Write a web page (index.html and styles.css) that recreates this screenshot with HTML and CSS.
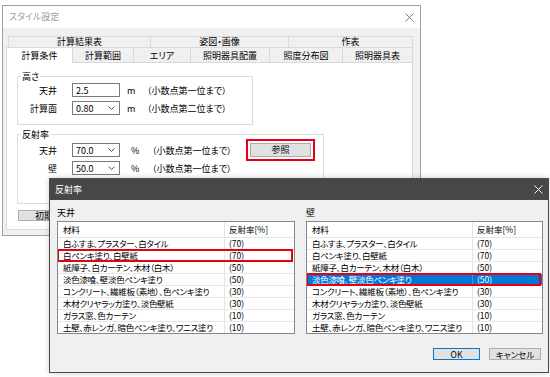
FILE: index.html
```html
<!DOCTYPE html>
<html lang="ja">
<head>
<meta charset="utf-8">
<title>スタイル設定</title>
<link rel="stylesheet" href="styles.css">
</head>
<body>
<div class="desk">
  <section class="win back">
    <header class="back-bar">
      <span class="back-title">スタイル設定</span>
      <svg class="xicon x-back" width="9" height="9" viewBox="0 0 9 9"><path d="M0.5 0.5L8.5 8.5M8.5 0.5L0.5 8.5"/></svg>
    </header>
    <div class="tabs">
      <div class="tabrow r1">
        <div class="tab">計算結果表</div>
        <div class="tab">姿図・画像</div>
        <div class="tab">作表</div>
      </div>
      <div class="tabrow r2">
        <div class="tab sel">計算条件</div>
        <div class="tab">計算範囲</div>
        <div class="tab">エリア</div>
        <div class="tab">照明器具配置</div>
        <div class="tab">照度分布図</div>
        <div class="tab">照明器具表</div>
      </div>
    </div>
    <div class="panel">
      <div class="group g-height">
        <span class="legend">高さ</span>
        <div class="frows">
          <div class="frow">
            <span class="flabel">天井</span>
            <span class="field">2.5</span>
            <span class="unit-m">m</span>
            <span class="note">（小数点第一位まで）</span>
          </div>
          <div class="frow">
            <span class="flabel">計算面</span>
            <span class="field">0.80<svg class="chev" width="7" height="4" viewBox="0 0 7 4"><path d="M0.5 0.5L3.5 3.5L6.5 0.5"/></svg></span>
            <span class="unit-m">m</span>
            <span class="note">（小数点第二位まで）</span>
          </div>
        </div>
      </div>
      <div class="group g-refl">
        <span class="legend">反射率</span>
        <div class="frows">
          <div class="frow">
            <span class="flabel">天井</span>
            <span class="field">70.0<svg class="chev" width="7" height="4" viewBox="0 0 7 4"><path d="M0.5 0.5L3.5 3.5L6.5 0.5"/></svg></span>
            <span class="unit-p">%</span>
            <span class="note note-w">（小数点第一位まで）</span>
            <button class="btn btn-ref">参照</button>
          </div>
          <div class="frow">
            <span class="flabel">壁</span>
            <span class="field">50.0<svg class="chev" width="7" height="4" viewBox="0 0 7 4"><path d="M0.5 0.5L3.5 3.5L6.5 0.5"/></svg></span>
            <span class="unit-p">%</span>
            <span class="note">（小数点第一位まで）</span>
          </div>
        </div>
      </div>
      <button class="btn btn-init">初期</button>
    </div>
  </section>

  <section class="win front">
    <header class="front-bar">
      <span>反射率</span>
      <svg class="xicon x-front" width="9" height="9" viewBox="0 0 9 9"><path d="M0.5 0.5L8.5 8.5M8.5 0.5L0.5 8.5"/></svg>
    </header>
    <div class="client">
      <div class="cols">
        <div class="col left">
          <div class="clabel">天井</div>
          <div class="list">
            <div class="lhead"><span class="c1">材料</span><span class="c2">反射率[%]</span></div>
            <div class="lrow"><span class="c1">白ふすま、プラスター、白タイル</span><span class="c2">(70)</span></div>
            <div class="lrow mark"><span class="c1">白ペンキ塗り、白壁紙</span><span class="c2">(70)</span></div>
            <div class="lrow"><span class="c1">紙障子、白カーテン、木材（白木）</span><span class="c2">(50)</span></div>
            <div class="lrow"><span class="c1">淡色漆喰、壁淡色ペンキ塗り</span><span class="c2">(50)</span></div>
            <div class="lrow"><span class="c1">コンクリート、繊維板（素地）、色ペンキ塗り</span><span class="c2">(30)</span></div>
            <div class="lrow"><span class="c1">木材クリヤラッカ塗り、淡色壁紙</span><span class="c2">(30)</span></div>
            <div class="lrow"><span class="c1">ガラス窓、色カーテン</span><span class="c2">(10)</span></div>
            <div class="lrow"><span class="c1">土壁、赤レンガ、暗色ペンキ塗り、ワニス塗り</span><span class="c2">(10)</span></div>
          </div>
        </div>
        <div class="col right">
          <div class="clabel">壁</div>
          <div class="list">
            <div class="lhead"><span class="c1">材料</span><span class="c2">反射率[%]</span></div>
            <div class="lrow"><span class="c1">白ふすま、プラスター、白タイル</span><span class="c2">(70)</span></div>
            <div class="lrow"><span class="c1">白ペンキ塗り、白壁紙</span><span class="c2">(70)</span></div>
            <div class="lrow"><span class="c1">紙障子、白カーテン、木材（白木）</span><span class="c2">(50)</span></div>
            <div class="lrow sel mark"><span class="c1">淡色漆喰、壁淡色ペンキ塗り</span><span class="c2">(50)</span></div>
            <div class="lrow"><span class="c1">コンクリート、繊維板（素地）、色ペンキ塗り</span><span class="c2">(30)</span></div>
            <div class="lrow"><span class="c1">木材クリヤラッカ塗り、淡色壁紙</span><span class="c2">(30)</span></div>
            <div class="lrow"><span class="c1">ガラス窓、色カーテン</span><span class="c2">(10)</span></div>
            <div class="lrow"><span class="c1">土壁、赤レンガ、暗色ペンキ塗り、ワニス塗り</span><span class="c2">(10)</span></div>
          </div>
        </div>
      </div>
      <div class="btns">
        <button class="btn dbtn ok">OK</button>
        <button class="btn dbtn cancel">キャンセル</button>
      </div>
    </div>
  </section>
</div>
</body>
</html>
```
FILE: styles.css
```css
* { box-sizing: border-box; }
html, body { margin: 0; padding: 0; }
body {
  width: 550px;
  height: 377px;
  overflow: hidden;
  background: #fff;
  color: #000;
  font-family: "Noto Sans CJK JP", "Noto Sans", sans-serif;
  font-feature-settings: "palt" 1;
}
.desk { position: relative; width: 550px; height: 377px; }
.win { position: absolute; display: flex; flex-direction: column; }

/* back window */
.back {
  left: 2px; top: 5px; width: 419px; height: 231px;
  border: 1px solid #a0a0a0;
  background: #f0f0f0;
}
.back-bar {
  flex: none; height: 22px; background: #fff;
  display: flex; align-items: center; justify-content: space-between;
  padding: 0 6px;
}
.back-title { font-size: 9px; line-height: 12px; color: #9a9a9a; }
.xicon { fill: none; stroke-width: 1; }
.x-back { stroke: #7a7a7a; }
.x-front { stroke: #ffffff; }

.tabs { flex: none; margin: 8px 0 0 5px; width: 405px; }
.tabrow { display: grid; border-right: 1px solid #d9d9d9; }
.r1 { grid-template-columns: 142px 138px 1fr; height: 11px; }
.r2 { grid-template-columns: 64px 61px 57px 79px 73px 1fr; height: 15px; }
.tab {
  border-left: 1px solid #d9d9d9; border-top: 1px solid #d9d9d9;
  background: #f0f0f0;
  font-size: 9px; line-height: 10px;
  display: flex; align-items: center; justify-content: center;
  white-space: nowrap;
}
.tab.sel {
  background: #fff; margin-left: -2px; height: 16px;
  position: relative; z-index: 1;
}

.panel {
  flex: none; margin-left: 3px; width: 407px; height: 168px;
  border: 1px solid #d9d9d9; background: #fff;
  padding: 13px 0 0 10px;
  display: flex; flex-direction: column; align-items: flex-start;
}
.group { flex: none; border: 1px solid #dcdcdc; }
.g-height { width: 236px; height: 49px; }
.g-refl { width: 307px; height: 70px; margin-top: 9px; }
.legend {
  display: block; width: max-content;
  margin: -6px 0 0 3px; padding: 0 1px;
  background: #fff; font-size: 9px; line-height: 11px;
}
.frows { display: flex; flex-direction: column; gap: 4px; }
.g-height .frows { margin-top: 1px; }
.g-refl .frows { margin-top: 3px; }
.frow { display: flex; align-items: center; height: 14px; font-size: 9px; line-height: 11px; white-space: nowrap; }
.flabel { width: 39px; margin-right: 15px; text-align: right; }
.field {
  width: 48px; height: 14px; flex: none;
  border: 1px solid #7a7a7a; background: #fff;
  display: flex; align-items: center; justify-content: space-between;
  padding: 0 4px 0 3px;
}
.chev { fill: none; stroke: #555; stroke-width: 1; }
.unit-m { margin-left: 7px; width: 20px; }
.unit-p { margin-left: 11px; width: 21px; }
.note-w { width: 98px; }

.btn {
  margin: 0; padding: 0;
  background: #e1e1e1; border: 1px solid #adadad; color: #000;
  font-family: inherit; font-feature-settings: "palt" 1;
  display: flex; align-items: center; justify-content: center;
}
.btn-ref { width: 61px; height: 14px; font-size: 9px; line-height: 10px; outline: 2px solid #e60012; outline-offset: 2px; }
.btn-init {
  width: 88px; height: 11px; margin: 6px 0 0 1px;
  justify-content: flex-start; padding-left: 16px;
  font-size: 9px; line-height: 9px;
}

/* front dialog */
.front {
  left: 49px; top: 178px; width: 500px; height: 195px;
  border: 1px solid #4a4a4a;
  background: #f0f0f0;
  box-shadow: 0 0 6px rgba(0, 0, 0, 0.2);
}
.front-bar {
  flex: none; height: 21px; background: #474747; color: #fff;
  display: flex; align-items: center; justify-content: space-between;
  padding: 0 5px; font-size: 9px; line-height: 12px;
}
.client { flex: 1; padding: 7px 4px 0 7px; display: flex; flex-direction: column; }
.cols { display: grid; grid-template-columns: 238px 237px; column-gap: 11px; }
.clabel { height: 12px; margin-bottom: 2px; font-size: 9px; line-height: 12px; }
.list {
  height: 113px; overflow: hidden;
  border: 1px solid #828790; background: #fff;
  font-size: 8.5px; line-height: 11px;
}
.lhead, .lrow { display: grid; }
.left .lhead, .left .lrow { grid-template-columns: 166px 1fr; }
.right .lhead, .right .lrow { grid-template-columns: 165px 1fr; }
.lhead { height: 16px; border-bottom: 1px solid #e5e5e5; }
.lhead .c1, .lhead .c2 { line-height: 15px; }
.lrow { height: 12px; border-bottom: 1px solid #e6e6e6; position: relative; }
.c1 { padding-left: 5px; white-space: nowrap; overflow: hidden; letter-spacing: -0.3px; }
.c2 { padding-left: 4px; border-left: 1px solid #e5e5e5; white-space: nowrap; }
.lrow.sel { background: #0078d7; color: #fff; }
.lrow.sel .c2 { border-left-color: #3d96df; }
.lrow.mark::after {
  content: ""; position: absolute;
  left: -1px; right: 1px; top: -1px; bottom: -1px;
  border: 2px solid #e60012;
}
.btns { display: flex; justify-content: flex-end; gap: 9px; margin: 14px 3px 0 0; }
.dbtn { height: 12px; font-size: 8.5px; line-height: 10px; }
.ok { width: 47px; border-color: #0078d7; }
.cancel { width: 52px; }
```
